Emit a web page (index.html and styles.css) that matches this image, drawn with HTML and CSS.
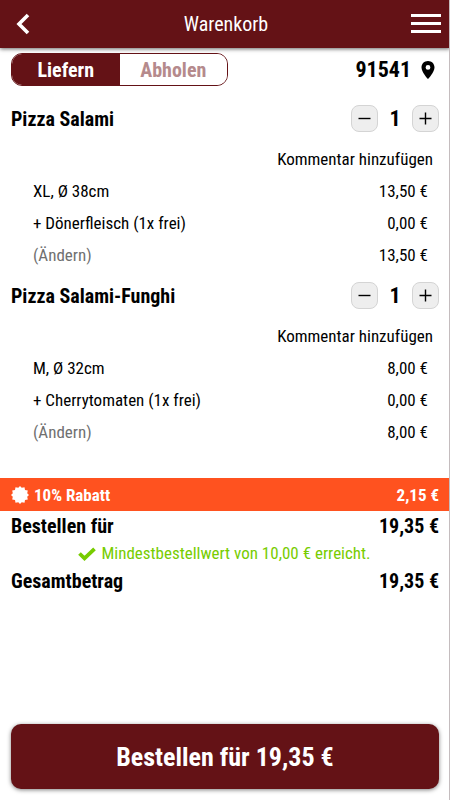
FILE: index.html
```html
<!DOCTYPE html>
<html lang="de">

<head>
    <meta charset="UTF-8">
    <meta name="viewport" content="width=device-width, initial-scale=1.0">
    <title>Warenkorb</title>
    <link rel="stylesheet" href="styles.css">
</head>

<body>
    <header class="topbar">
        <button class="icon-btn" type="button" aria-label="Zurück">
            <svg width="24" height="24" viewBox="0 0 24 24"><path d="M17 3L8 12L17 21" fill="none" stroke="#fff" stroke-width="3.6"/></svg>
        </button>
        <h1 class="title">Warenkorb</h1>
        <button class="icon-btn menu" type="button" aria-label="Menü">
            <svg width="30" height="20" viewBox="0 0 30 20"><path d="M0 1.5H30M0 9.5H30M0 17.5H30" stroke="#fff" stroke-width="3"/></svg>
        </button>
    </header>

    <main class="cart">
        <div class="delivery">
            <div class="switch">
                <button class="switch-btn active" type="button">Liefern</button>
                <button class="switch-btn" type="button">Abholen</button>
            </div>
            <a class="zip" href="#">91541
                <svg width="14" height="18" viewBox="0 0 14 18"><path fill-rule="evenodd" d="M7 0C3.2 0 .5 2.8 .5 6.4C.5 11 7 18 7 18S13.5 11 13.5 6.4C13.5 2.8 10.8 0 7 0ZM7 4A2.4 2.4 0 1 1 7 8.8A2.4 2.4 0 1 1 7 4Z"/></svg>
            </a>
        </div>

        <section class="item">
            <div class="item-head">
                <h2>Pizza Salami</h2>
                <div class="amount">
                    <button type="button" aria-label="Weniger"><svg width="13" height="13" viewBox="0 0 13 13"><path d="M.5 6.5H12.5"/></svg></button>
                    <span>1</span>
                    <button type="button" aria-label="Mehr"><svg width="13" height="13" viewBox="0 0 13 13"><path d="M.5 6.5H12.5M6.5 .5V12.5"/></svg></button>
                </div>
            </div>
            <a class="comment" href="#">Kommentar hinzufügen</a>
            <div class="row"><span>XL, Ø 38cm</span><span>13,50 €</span></div>
            <div class="row"><span>+ Dönerfleisch (1x frei)</span><span>0,00 €</span></div>
            <div class="row"><a class="change" href="#">(Ändern)</a><span>13,50 €</span></div>
        </section>

        <section class="item">
            <div class="item-head">
                <h2>Pizza Salami-Funghi</h2>
                <div class="amount">
                    <button type="button" aria-label="Weniger"><svg width="13" height="13" viewBox="0 0 13 13"><path d="M.5 6.5H12.5"/></svg></button>
                    <span>1</span>
                    <button type="button" aria-label="Mehr"><svg width="13" height="13" viewBox="0 0 13 13"><path d="M.5 6.5H12.5M6.5 .5V12.5"/></svg></button>
                </div>
            </div>
            <a class="comment" href="#">Kommentar hinzufügen</a>
            <div class="row"><span>M, Ø 32cm</span><span>8,00 €</span></div>
            <div class="row"><span>+ Cherrytomaten (1x frei)</span><span>0,00 €</span></div>
            <div class="row"><a class="change" href="#">(Ändern)</a><span>8,00 €</span></div>
        </section>

        <div class="discount">
            <svg width="18" height="18" viewBox="0 0 18 18"><path fill="#fff" d="M9 0L10.7 1.8L13.5 1.2L14 3.9L16.8 4.5L16.2 7.2L18 9L16.2 10.8L16.8 13.5L14 14.1L13.5 16.8L10.7 16.2L9 18L7.3 16.2L4.5 16.8L4 14.1L1.2 13.5L1.8 10.8L0 9L1.8 7.2L1.2 4.5L4 3.9L4.5 1.2L7.3 1.8Z"/></svg>
            <span class="discount-label">10% Rabatt</span>
            <span>2,15 €</span>
        </div>
        <div class="sum"><span>Bestellen für</span><span>19,35 €</span></div>
        <p class="minimum">
            <svg width="18" height="14" viewBox="0 0 18 14"><path d="M1.5 6.5L6.5 11.3L16.5 1.8" fill="none" stroke="#7c0" stroke-width="3.8"/></svg>
            Mindestbestellwert von 10,00 € erreicht.
        </p>
        <div class="sum"><span>Gesamtbetrag</span><span>19,35 €</span></div>
    </main>

    <footer class="checkout">
        <button class="order" type="button">Bestellen für 19,35 €</button>
    </footer>
</body>

</html>
```

FILE: styles.css
```css
* {
    box-sizing: border-box;
}

body {
    margin: 0;
    min-height: 100vh;
    display: flex;
    flex-direction: column;
    background: #fff;
    border-right: 1px solid #c4bcbe;
    color: #000;
    font-family: "Roboto Condensed", "Liberation Sans Narrow", Roboto, sans-serif;
    font-size: 17px;
}

button {
    font-family: inherit;
    cursor: pointer;
}

a {
    color: inherit;
    text-decoration: none;
}

h1,
h2,
p {
    margin: 0;
}

svg {
    display: block;
    flex: none;
}

.topbar {
    height: 48px;
    margin-right: -1px;
    padding: 0 9px 0 11px;
    display: grid;
    grid-template-columns: 1fr auto 1fr;
    align-items: center;
    background: #641216;
    color: #fff;
    box-shadow: 0 1px 4px rgba(0, 0, 0, 0.6);
}

.icon-btn {
    padding: 0;
    border: 0;
    background: none;
    justify-self: start;
}

.menu {
    justify-self: end;
}

.title {
    font-size: 20px;
    font-weight: 400;
}

.cart {
    flex: 1;
}

.delivery {
    padding: 5px 10px 0 11px;
    display: flex;
    justify-content: space-between;
    align-items: center;
}

.switch {
    width: 217px;
    height: 33px;
    display: flex;
    border: 1px solid #641216;
    border-radius: 11px;
    overflow: hidden;
}

.switch-btn {
    flex: 1;
    padding: 0;
    border: 0;
    background: #fff;
    color: #b58a8c;
    font-size: 20px;
    font-weight: 700;
}

.switch-btn.active {
    background: #641216;
    color: #fff;
}

.zip {
    padding-right: 4px;
    display: flex;
    align-items: center;
    gap: 10px;
    font-size: 22px;
    font-weight: 700;
}

.item {
    padding: 0 10px 8px 11px;
}

.delivery + .item {
    margin-top: 16px;
}

.item-head {
    height: 33px;
    margin-bottom: 8px;
    display: flex;
    justify-content: space-between;
    align-items: center;
}

h2 {
    font-size: 20px;
    font-weight: 700;
}

.amount {
    display: flex;
    align-items: center;
    font-size: 22px;
    font-weight: 700;
}

.amount span {
    width: 34px;
    text-align: center;
}

.amount button {
    width: 27px;
    height: 27px;
    padding: 0;
    display: flex;
    justify-content: center;
    align-items: center;
    background: #eee;
    border: 1px solid #d4d4d4;
    border-radius: 8px;
}

.amount path {
    stroke: #000;
    stroke-width: 1.4;
}

.comment {
    display: block;
    padding-right: 6px;
    line-height: 32px;
    text-align: right;
}

.row {
    padding: 0 11px 0 22px;
    display: flex;
    justify-content: space-between;
    line-height: 32px;
}

.change {
    color: #707070;
}

.discount {
    height: 33px;
    margin-top: 22px;
    padding: 0 10px 0 11px;
    display: flex;
    align-items: center;
    gap: 5px;
    background: #ff521f;
    color: #fff;
    font-weight: 700;
}

.discount-label {
    flex: 1;
}

.sum {
    padding: 0 10px 0 11px;
    display: flex;
    justify-content: space-between;
    font-size: 20px;
    font-weight: 700;
    line-height: 30px;
}

.minimum {
    display: flex;
    justify-content: center;
    align-items: center;
    gap: 5px;
    color: #7c0;
    line-height: 25px;
}

.checkout {
    padding: 11px 10px 11px 11px;
}

.order {
    width: 100%;
    height: 65px;
    border: 0;
    border-radius: 10px;
    background: #641216;
    color: #fff;
    font-size: 26px;
    font-weight: 700;
    box-shadow: 0 1px 4px rgba(0, 0, 0, 0.5);
}
```
